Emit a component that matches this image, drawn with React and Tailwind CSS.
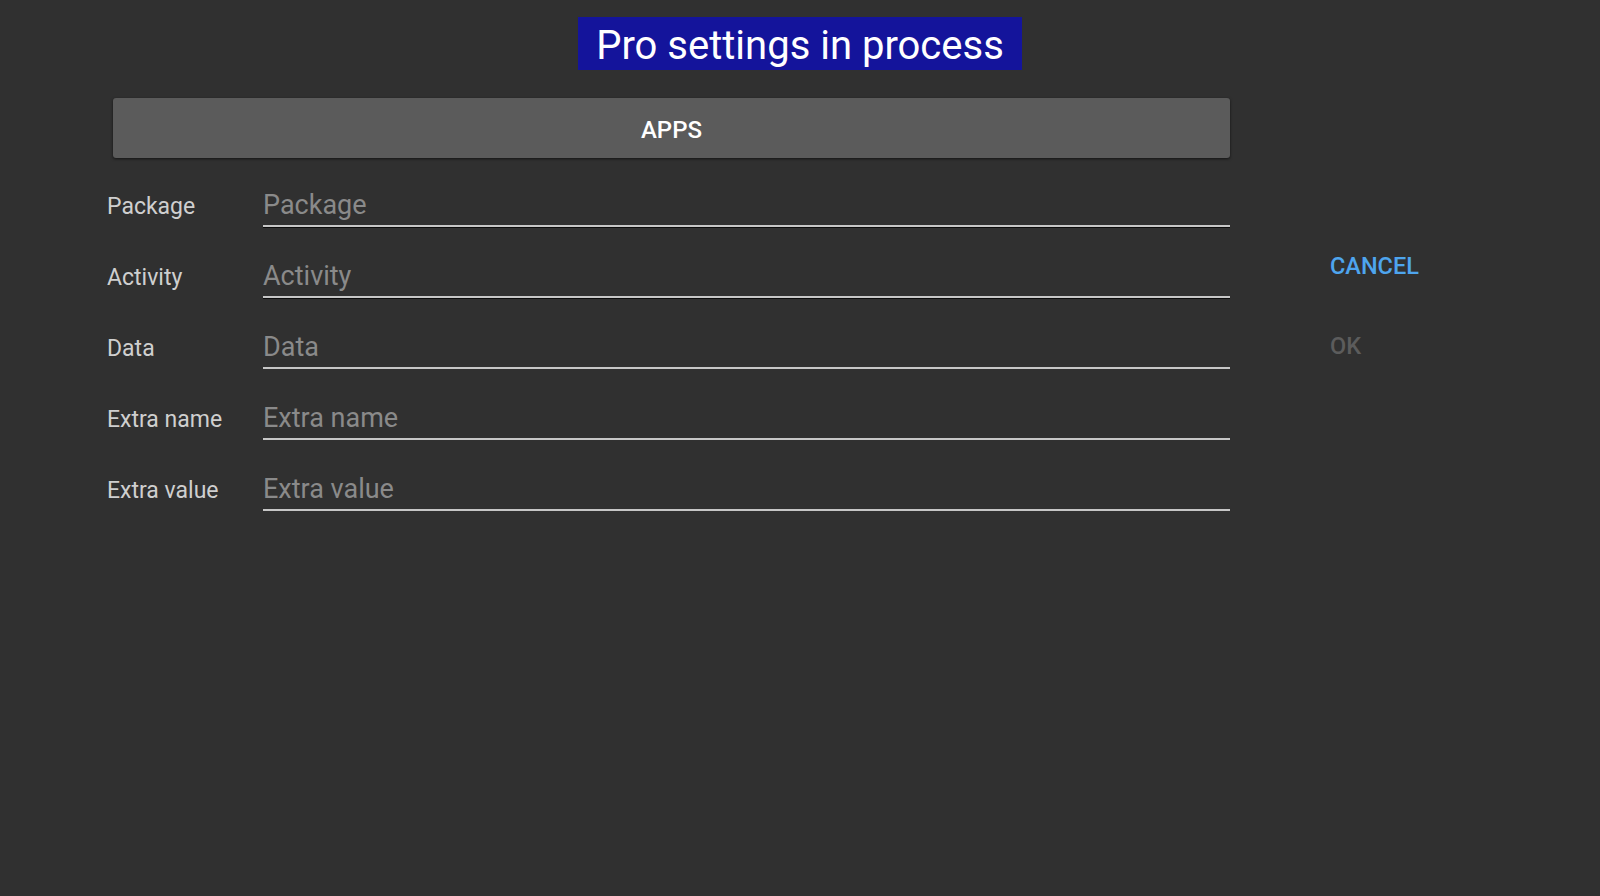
import React from "react";

const fields = ["Package", "Activity", "Data", "Extra name", "Extra value"];

export default function App() {
  return (
    <div
      className="w-full h-[896px] bg-[#303030] overflow-hidden"
      style={{ fontFamily: "Roboto, 'Noto Sans', sans-serif" }}
    >
      <div className="flex justify-center pt-[17px]">
        <div className="bg-[#14149b] text-white text-[40px] h-[53px] leading-[49px] pt-[4px] px-[18px]">
          Pro settings in process
        </div>
      </div>
      <div className="flex">
        <div className="pl-[107px] w-[1230px] shrink-0">
          <div className="ml-[6px] mt-[28px] h-[60px] pt-[3px] bg-[#5b5b5b] rounded-[3px] shadow-[0_1px_3px_rgba(0,0,0,0.6)] flex items-center justify-center">
            <span className="text-white text-[24px] font-medium">APPS</span>
          </div>
          <div className="flex flex-col">
            {fields.map((f, i) => (
              <div
                key={f}
                className={`flex items-baseline ${i === 0 ? "mt-[3px]" : "mt-[5px]"}`}
              >
                <div className="w-[156px] shrink-0 text-[23px] text-[#cfcfcf]">
                  {f}
                </div>
                <div
                  className={`flex-1 text-[27px] leading-[34px] pt-[27px] pb-[3px] text-[#8a8a8a] border-b-2 border-[#c6c6c6] ${
                    i < 2 ? "shadow-[0_1px_0_#0c0c0c]" : ""
                  }`}
                >
                  {f}
                </div>
              </div>
            ))}
          </div>
        </div>
        <div className="pl-[100px] pt-[180px] flex flex-col gap-[48px]">
          <div className="text-[23.5px] font-medium text-[#4ea5ee] leading-[32px]">
            CANCEL
          </div>
          <div className="text-[23.5px] font-medium text-[#5c5c5c] leading-[32px]">
            OK
          </div>
        </div>
      </div>
    </div>
  );
}
